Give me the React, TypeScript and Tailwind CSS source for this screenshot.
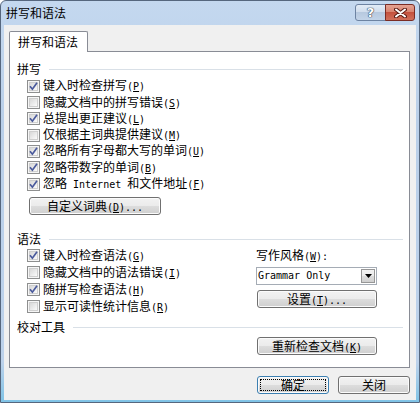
import type { ReactNode } from "react";

const SPELLING = [
  { label: "键入时检查拼写", key: "P", checked: true },
  { label: "隐藏文档中的拼写错误", key: "S", checked: false },
  { label: "总提出更正建议", key: "L", checked: true },
  { label: "仅根据主词典提供建议", key: "M", checked: false },
  { label: "忽略所有字母都大写的单词", key: "U", checked: true },
  { label: "忽略带数字的单词", key: "B", checked: true },
];

const GRAMMAR = [
  { label: "键入时检查语法", key: "G", checked: true },
  { label: "隐藏文档中的语法错误", key: "I", checked: false },
  { label: "随拼写检查语法", key: "H", checked: true },
  { label: "显示可读性统计信息", key: "R", checked: false },
];

function Acc({ k }: { k: string }) {
  return (
    <span className="font-['DejaVu_Sans_Mono',monospace] text-[10px]">
      (<span className="underline">{k}</span>)
    </span>
  );
}

function Box({ checked }: { checked: boolean }) {
  return (
    <div className="relative w-[13px] h-[13px] shrink-0 border border-[#8e8f8f] bg-[#f6f6f6] p-px">
      <div className="w-full h-full border border-[#cfcfcf] bg-linear-to-br from-[#d8d8d8] to-[#fbfbfb]" />
      {checked && (
        <svg className="absolute left-0 top-0" width="11" height="11" viewBox="0 0 11 11">
          <path d="M2 5.2 L4.4 8.2 L9 1.8" stroke="#4a5a9c" strokeWidth="1.7" fill="none" />
        </svg>
      )}
    </div>
  );
}

function Check({ checked, h, children }: { checked: boolean; h: string; children: ReactNode }) {
  return (
    <div className={`flex items-center ${h}`}>
      <Box checked={checked} />
      <span className="ml-[3px] leading-[16px] whitespace-nowrap">{children}</span>
    </div>
  );
}

function Section({ label }: { label: string }) {
  return (
    <div className="flex items-center h-[16px]">
      <span className="leading-[16px]">{label}</span>
      <div className="flex-1 h-px bg-[#d9e0e7] ml-[8px]" />
    </div>
  );
}

function Button({ children, className = "", primary = false }: { children: ReactNode; className?: string; primary?: boolean }) {
  return (
    <div
      className={`relative h-[18px] flex items-center justify-center rounded-[3px] border leading-none shadow-[inset_0_0_0_1px_#fbfbfb] bg-[linear-gradient(to_bottom,#f2f2f2_0%,#ebebeb_50%,#dddddd_50%,#cfcfcf_100%)] ${
        primary ? "border-[#3c7fb1]" : "border-[#707070]"
      } ${className}`}
    >
      {primary && <div className="absolute inset-[2px] border border-dotted border-black" />}
      <span className="relative whitespace-nowrap">{children}</span>
    </div>
  );
}

export default function App() {
  return (
    <div className="w-[420px] h-[403px] bg-white">
      <div className="w-[420px] h-[403px] flex flex-col border border-[#56677e] rounded-t-[6px] bg-[linear-gradient(to_bottom,#c4d8ef,#b9cfe9_30%,#bdd2eb_90%,#7fc3e6)] text-[12px] text-black font-['Noto_Sans_CJK_SC',sans-serif]">
        {/* Title bar */}
        <div className="h-[24px] flex items-start pl-[5px] pr-[4px]">
          <span className="leading-[22px] mt-px">拼写和语法</span>
          <div className="ml-auto mt-[3px] flex">
            <div className="w-[31px] h-[17px] flex items-center justify-center rounded-l-[3px] border border-[#6d83a2] bg-[linear-gradient(to_bottom,#e3ecf6_0%,#cfdcec_50%,#b7c9df_50%,#c3d4e8_100%)]">
              <span className="text-white font-bold text-[13px] leading-none font-['DejaVu_Sans',sans-serif] [text-shadow:0_0_1px_#2c3e57,0_0_1px_#2c3e57,0_0_1px_#2c3e57]">
                ?
              </span>
            </div>
            <div className="w-[30px] h-[17px] -ml-px flex items-center justify-center rounded-r-[3px] border border-[#7a2c24] bg-[linear-gradient(to_bottom,#e5a493_0%,#d7806c_50%,#c4513d_50%,#d0705b_100%)]">
              <svg width="13" height="10" viewBox="0 0 13 10">
                <path d="M2 1.5 L11 8.5 M11 1.5 L2 8.5" stroke="#5b1c14" strokeWidth="4" strokeLinecap="round" />
                <path d="M2 1.5 L11 8.5 M11 1.5 L2 8.5" stroke="#ffffff" strokeWidth="2" strokeLinecap="round" />
              </svg>
            </div>
          </div>
        </div>

        {/* Client area */}
        <div className="mx-[3px] h-[375px] bg-[#f0f0f0] flex flex-col">
          <div className="pl-[5px] pt-[6px]">
            <div className="relative z-10 w-[79px] h-[21px] flex items-center pl-[8px] bg-white border-t border-l border-r border-[#898c95] rounded-t-[2px]">
              <span className="leading-[16px]">拼写和语法</span>
            </div>
          </div>

          <div className="-mt-px ml-[5px] w-[401px] h-[317px] border border-[#898c95] bg-white pl-[7px] pr-[6px] pt-[9px] flex flex-col">
            <Section label="拼写" />
            <div className="mt-px pl-[10px] flex flex-col">
              {SPELLING.map((r) => (
                <Check key={r.key} checked={r.checked} h="h-[16.33px]">
                  {r.label}
                  <Acc k={r.key} />
                </Check>
              ))}
              <Check checked h="h-[16.33px]">
                忽略<span className="font-['DejaVu_Sans_Mono',monospace] text-[10px]"> Internet </span>和文件地址
                <Acc k="F" />
              </Check>
            </div>
            <Button className="mt-[5px] ml-[12px] w-[132px]">
              自定义词典<Acc k="D" />
              <span className="font-['DejaVu_Sans_Mono',monospace] text-[10px]">...</span>
            </Button>

            <div className="mt-[16px]">
              <Section label="语法" />
            </div>
            <div className="flex">
              <div className="w-[239px] pl-[10px] flex flex-col">
                {GRAMMAR.map((r) => (
                  <Check key={r.key} checked={r.checked} h="h-[17px]">
                    {r.label}
                    <Acc k={r.key} />
                  </Check>
                ))}
              </div>
              <div className="w-[121px] flex flex-col">
                <div className="h-[16px] leading-[16px] whitespace-nowrap">
                  写作风格<Acc k="W" />
                  <span className="font-['DejaVu_Sans_Mono',monospace] text-[10px]">:</span>
                </div>
                <div className="mt-[4px] h-[18px] w-[121px] border border-[#a5acb5] bg-white flex items-center">
                  <span className="pl-px font-['DejaVu_Sans_Mono',monospace] text-[10px] leading-none">Grammar Only</span>
                  <div className="ml-auto mr-px w-[14px] h-[14px] border border-[#979797] bg-[linear-gradient(to_bottom,#f2f2f2_0%,#ebebeb_50%,#dddddd_50%,#cfcfcf_100%)] flex items-center justify-center">
                    <svg width="7" height="4" viewBox="0 0 7 4">
                      <path d="M0 0 H7 L3.5 4 Z" fill="#000" />
                    </svg>
                  </div>
                </div>
                <Button className="mt-[5px] ml-px w-[120px]">
                  设置<Acc k="T" />
                  <span className="font-['DejaVu_Sans_Mono',monospace] text-[10px]">...</span>
                </Button>
              </div>
            </div>

            <div className="mt-[4px]">
              <Section label="校对工具" />
            </div>
            <Button className="mt-[2px] ml-[240px] w-[120px]">
              重新检查文档<Acc k="K" />
            </Button>
          </div>

          <div className="mt-[8px] pr-[6px] flex justify-end gap-[9px]">
            <Button primary className="w-[72px]">
              确定
            </Button>
            <Button className="w-[72px]">关闭</Button>
          </div>
        </div>
      </div>
    </div>
  );
}
